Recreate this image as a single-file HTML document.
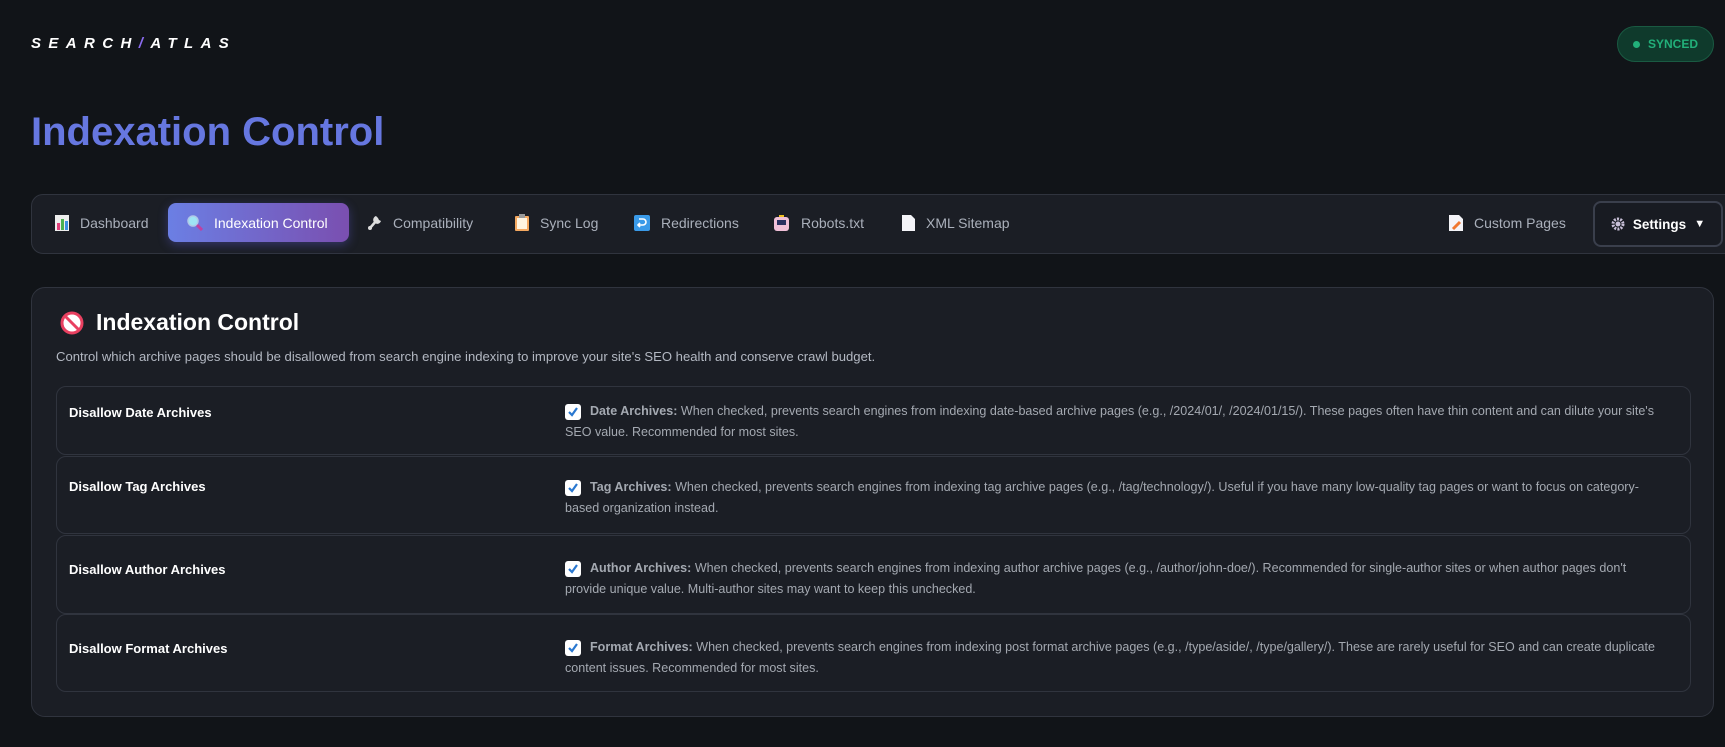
<!DOCTYPE html>
<html><head><meta charset="utf-8"><style>
*{box-sizing:border-box;margin:0;padding:0}
body{width:1725px;height:747px;background:#111418;font-family:"Liberation Sans",sans-serif;overflow:hidden;position:relative;color:#fff}
.logo{position:absolute;left:31px;top:35px;font-size:15px;font-weight:bold;font-style:italic;letter-spacing:7.4px;color:#fff}
.logo b{color:#8b6cf0}
.sync{position:absolute;left:1617px;top:26px;width:97px;height:36px;border-radius:18px;background:#0f3a2c;border:1px solid #1a5a42;color:#22b07a;font-size:12px;font-weight:bold;display:flex;align-items:center;justify-content:center;gap:8px}
.sync i{width:7px;height:7px;border-radius:50%;background:#22b07a}
h1{position:absolute;left:31px;top:110px;font-size:40px;font-weight:bold;color:#6677e0}
.nav{position:absolute;left:31px;top:194px;width:1710px;height:60px;background:#1b1e25;border:1px solid #30343e;border-radius:12px}
.tab{position:absolute;top:8px;height:39px;display:flex;align-items:center;font-size:14px;color:#aab0bb}
.tab svg{margin-right:11px}
.act{left:136px;width:181px;background:linear-gradient(90deg,#6b7fe4,#7a4fb0);border-radius:8px;color:#fff;padding-left:19px;box-shadow:0 3px 10px rgba(100,100,230,.35)}
.set{position:absolute;left:1561px;top:6px;width:130px;height:46px;border:2px solid #3a3f4c;border-radius:8px;background:#181b22;display:flex;align-items:center;justify-content:center;font-size:13.5px;font-weight:bold;color:#fff;gap:8px}
.card{position:absolute;left:31px;top:287px;width:1683px;height:430px;background:#1b1e25;border:1px solid #30343e;border-radius:14px}
.ch{position:absolute;left:28px;top:21px;display:flex;align-items:center;font-size:23px;font-weight:bold;color:#fff}
.desc{position:absolute;left:24px;top:61px;font-size:13.1px;color:#b3b8c2}
.row{position:absolute;left:24px;width:1635px;border:1px solid #30343e;border-radius:10px}
.lab{position:absolute;left:12px;font-size:13px;font-weight:bold;color:#fff}
.txt{position:absolute;left:508px;width:1100px;font-size:12.55px;line-height:21px;color:#a4a9b1;text-indent:25px}
.txt b{color:#a4a9b1}
.cb{position:absolute;left:0;top:3px;width:16px;height:16px;background:#fff;border-radius:3px;text-indent:0}
</style></head><body>
<div class="logo">SEARCH<b>/</b>ATLAS</div>
<div class="sync"><i></i>SYNCED</div>
<h1>Indexation Control</h1>
<div class="nav">
<div class="tab" style="left:23px"><svg width="14" height="16"><rect x="0" y="0" width="14" height="16" fill="#eee"/><rect x="2" y="8" width="3" height="7" fill="#e0407a"/><rect x="6" y="4" width="3" height="11" fill="#4ab050"/><rect x="10" y="6" width="3" height="9" fill="#3a8ee0"/></svg>Dashboard</div>
<div class="tab act"><svg width="16" height="16"><circle cx="6" cy="6" r="5" fill="#9ee4f4" stroke="#b0c8e8" stroke-width="1.5"/><line x1="10" y1="10" x2="15" y2="15" stroke="#c040a0" stroke-width="3"/></svg>Indexation Control</div>
<div class="tab" style="left:335px"><svg width="15" height="15"><path d="M3 13 L10 5" stroke="#ddd" stroke-width="2.5"/><path d="M9 1 a4 4 0 1 0 5 5 l-2 -1 l-1 -2z" fill="#ddd"/><circle cx="3" cy="13" r="2" fill="#ddd"/></svg>Compatibility</div>
<div class="tab" style="left:483px"><svg width="14" height="17"><rect x="0" y="2" width="14" height="15" rx="1" fill="#f4a860"/><rect x="2" y="4" width="10" height="11" fill="#fff4e0"/><rect x="4" y="0" width="6" height="4" fill="#999"/></svg>Sync Log</div>
<div class="tab" style="left:602px"><svg width="16" height="16"><rect width="16" height="16" rx="2" fill="#3a9ae8"/><path d="M5 4 h4 a3 3 0 0 1 0 6 h-5 M6 8 l-2 2 l2 2" stroke="#fff" stroke-width="1.6" fill="none"/></svg>Redirections</div>
<div class="tab" style="left:741px"><svg width="17" height="16"><rect x="1" y="2" width="15" height="14" rx="3" fill="#f0c0d8"/><rect x="4" y="5" width="9" height="5" fill="#2a3060"/><rect x="6" y="0" width="5" height="2" fill="#f0c020"/></svg>Robots.txt</div>
<div class="tab" style="left:870px"><svg width="13" height="16"><path d="M0 0 h9 l4 4 v12 h-13z" fill="#f4f4f8"/></svg>XML Sitemap</div>
<div class="tab" style="left:1417px"><svg width="14" height="16"><path d="M0 0 h10 l4 4 v12 h-14z" fill="#f4f4f8"/><path d="M4 14 l7 -7" stroke="#f07830" stroke-width="3"/></svg>Custom Pages</div>
<div class="set"><svg width="14" height="14"><circle cx="7" cy="7" r="5" fill="none" stroke="#c8c0d8" stroke-width="3" stroke-dasharray="2 1.2"/><circle cx="7" cy="7" r="2.5" fill="#c8c0d8"/></svg>Settings <span style="font-size:11px">▼</span></div>
</div>
<div class="card">
<div class="ch"><svg width="24" height="24" style="margin-right:12px"><circle cx="12" cy="12" r="10" fill="#fff" stroke="#e84060" stroke-width="3"/><line x1="5" y1="5" x2="19" y2="19" stroke="#e84060" stroke-width="3"/></svg>Indexation Control</div>
<div class="desc">Control which archive pages should be disallowed from search engine indexing to improve your site's SEO health and conserve crawl budget.</div>

<div class="row" style="top:98px;height:69px"><div class="lab" style="top:18px">Disallow Date Archives</div>
<div class="txt" style="top:14px"><span class="cb"><svg width="16" height="16"><path d="M4 8 l3 3 l5 -7" stroke="#2a78d0" stroke-width="2.2" fill="none"/></svg></span><b>Date Archives:</b> When checked, prevents search engines from indexing date-based archive pages (e.g., /2024/01/, /2024/01/15/). These pages often have thin content and can dilute your site's SEO value. Recommended for most sites.</div></div>

<div class="row" style="top:168px;height:78px"><div class="lab" style="top:22px">Disallow Tag Archives</div>
<div class="txt" style="top:20px"><span class="cb"><svg width="16" height="16"><path d="M4 8 l3 3 l5 -7" stroke="#2a78d0" stroke-width="2.2" fill="none"/></svg></span><b>Tag Archives:</b> When checked, prevents search engines from indexing tag archive pages (e.g., /tag/technology/). Useful if you have many low-quality tag pages or want to focus on category-based organization instead.</div></div>

<div class="row" style="top:247px;height:79px"><div class="lab" style="top:26px">Disallow Author Archives</div>
<div class="txt" style="top:22px"><span class="cb"><svg width="16" height="16"><path d="M4 8 l3 3 l5 -7" stroke="#2a78d0" stroke-width="2.2" fill="none"/></svg></span><b>Author Archives:</b> When checked, prevents search engines from indexing author archive pages (e.g., /author/john-doe/). Recommended for single-author sites or when author pages don't provide unique value. Multi-author sites may want to keep this unchecked.</div></div>

<div class="row" style="top:326px;height:78px"><div class="lab" style="top:26px">Disallow Format Archives</div>
<div class="txt" style="top:22px"><span class="cb"><svg width="16" height="16"><path d="M4 8 l3 3 l5 -7" stroke="#2a78d0" stroke-width="2.2" fill="none"/></svg></span><b>Format Archives:</b> When checked, prevents search engines from indexing post format archive pages (e.g., /type/aside/, /type/gallery/). These are rarely useful for SEO and can create duplicate content issues. Recommended for most sites.</div></div>
</div>
</body></html>
